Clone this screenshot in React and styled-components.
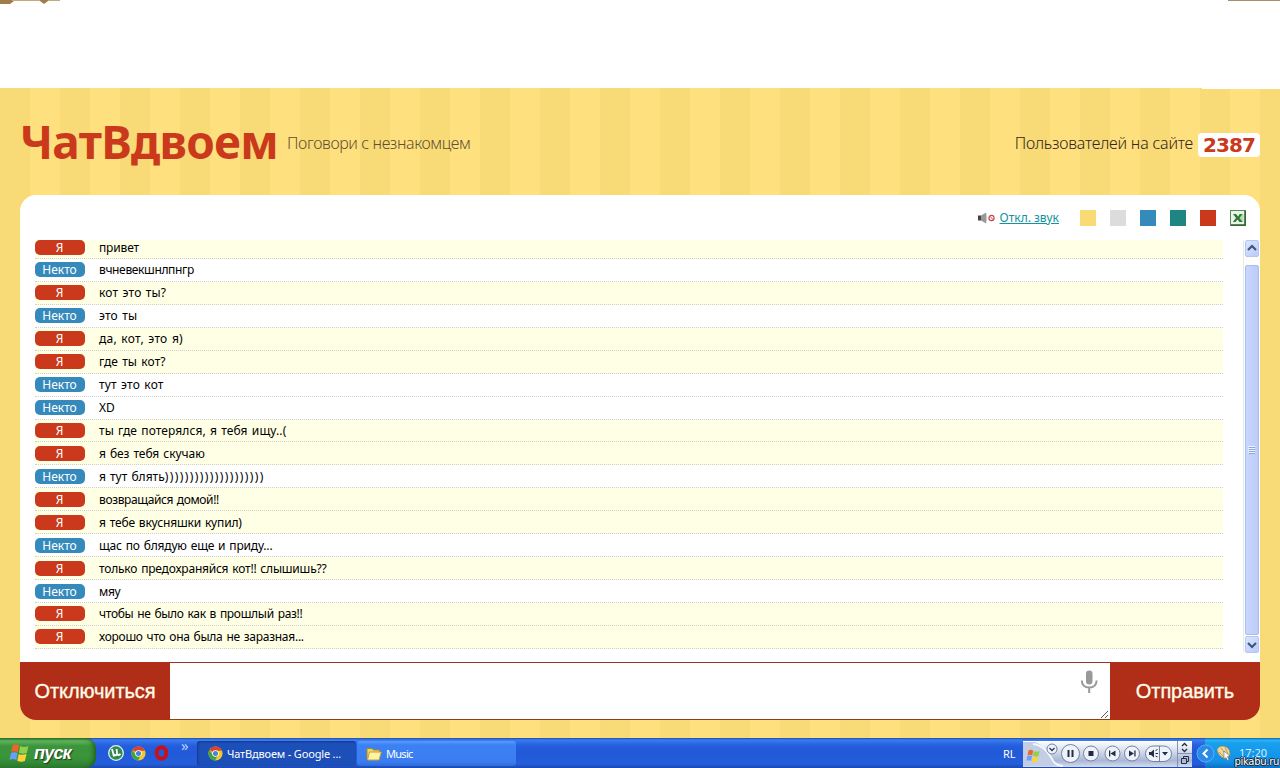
import React from 'react';
import styled, { createGlobalStyle } from 'styled-components';

const GlobalStyle = createGlobalStyle`
  * { box-sizing: border-box; }
  body {
    margin: 0;
    background: #fff;
    font-family: "Noto Sans", "DejaVu Sans", sans-serif;
  }
  button { margin: 0; }
`
const Screen = styled.div`
  display: flex;
  flex-direction: column;
  width: 1280px;
  height: 768px;
  overflow: hidden;
`
const TopStrip = styled.div`
  display: flex;
  justify-content: space-between;
  height: 88px;
  background: #fff;
`
const WoodLeft = styled.svg`
  width: 60px;
  height: 4px;
`
const WoodRight = styled.div`
  width: 52px;
  height: 1px;
  background: #a98d6c;
`
const Page = styled.div`
  display: flex;
  flex-direction: column;
  height: 650px;
  padding: 0 20px;
  background:
    linear-gradient(#fff, #fff) top right / 78px 1px no-repeat,
    repeating-linear-gradient(90deg, #f8da76 0 30px, #ffe07e 30px 60px);
`
const Header = styled.div`
  display: flex;
  align-items: center;
  height: 107px;
`
const Logo = styled.h1`
  margin: -2px 0 0;
  width: 267px;
  font-size: 46px;
  line-height: 50px;
  font-weight: bold;
  color: #ca391b;
  white-space: nowrap;
  letter-spacing: -0.7px;
`
const Slogan = styled.div`
  flex: 1;
  font-size: 16px;
  font-weight: 300;
  letter-spacing: -0.38px;
  color: #5f5032;
  padding-top: 3px;
`
const Online = styled.div`
  font-size: 16px;
  font-weight: 300;
  letter-spacing: -0.2px;
  color: #33261a;
  padding-top: 3px;
`
const Counter = styled.div`
  width: 62px;
  height: 24px;
  margin: 7px 0 0 5px;
  border-radius: 4px;
  background: #fff;
  color: #ca391b;
  font: bold 20px/25px "DejaVu Sans", sans-serif;
  letter-spacing: -0.9px;
  text-align: center;
`
const Panel = styled.div`
  display: flex;
  flex-direction: column;
  height: 525px;
  border-radius: 16px;
  overflow: hidden;
  background: #fff;
`
const Tools = styled.div`
  display: flex;
  align-items: center;
  justify-content: flex-end;
  height: 45px;
  padding-right: 14px;
`
const SoundLink = styled.a`
  margin: 0 21px 0 5px;
  font-size: 12px;
  color: #12939f;
  text-decoration: underline;
`
const Swatches = styled.div`
  display: flex;
  gap: 14px;
`
const Swatch = styled.div`
  width: 16px;
  height: 16px;
  background: ${p => p.$color};
`
const Chat = styled.div`
  display: flex;
  justify-content: space-between;
  height: 422px;
  padding-left: 15px;
`
const Messages = styled.div`
  width: 1188px;
  height: 413px;
`
// the first row is partly scrolled away, so it is shorter than the rest
const Row = styled.div`
  display: flex;
  height: 22.9375px;
  padding-top: 3.43px;
  border-bottom: 1px dotted #cfcfc4;
  background: ${p => p.$mine ? '#ffffe5' : '#fff'};

  &:first-child {
    height: 18.97px;
    padding-top: 0;
  }
`
const Author = styled.div`
  width: 50px;
  height: 15px;
  border-radius: 5px;
  background: ${p => p.$mine ? '#ca391b' : '#358abb'};
  color: #fff;
  font-size: 12px;
  line-height: 15px;
  text-align: center;
  text-indent: -1px;
`
const Message = styled.div`
  margin-left: 14px;
  font-size: 12px;
  line-height: 15px;
  color: #000;
  white-space: nowrap;
  word-spacing: 1px;
  letter-spacing: ${p => p.$track || 0}px;
`
const Brackets = styled.span`
  letter-spacing: 1.4px;
`
const Scrollbar = styled.div`
  display: flex;
  flex-direction: column;
  width: 17px;
  height: 413px;
  padding: 0 1px;
  background: #fdfdfa;
  border-left: 1px solid #e6ebe4;
`
const ScrollButton = styled.div`
  display: flex;
  align-items: center;
  justify-content: center;
  height: 17px;
  padding-right: 1px;
  border: 1px solid #b3c6f5;
  border-radius: 2px;
  background: linear-gradient(135deg, #dbe5fe, #b9cbf9);
`
const Thumb = styled.div`
  display: flex;
  align-items: center;
  justify-content: center;
  height: 371px;
  margin: 8px 0 1px;
  padding-right: 1px;
  border: 1px solid #a9bdee;
  border-radius: 2px;
  background: linear-gradient(90deg, #c9d7fd, #bccbf8);
`
const Compose = styled.div`
  display: flex;
  height: 58px;
`
const BigButton = styled.button`
  width: 150px;
  padding: 0;
  border: 0;
  background: #b02e17;
  color: #fffbe8;
  font: 20px "Liberation Sans", sans-serif;
  letter-spacing: -0.1px;
  -webkit-text-stroke: 0.35px #fffbe8;
`
const InputBox = styled.div`
  display: flex;
  flex-direction: column;
  justify-content: space-between;
  align-items: flex-end;
  flex: 1;
  border-top: 1px solid #8f3a28;
  border-bottom: 1px solid #8f3a28;
  background: #fff;
`
const MicIcon = styled.svg`
  width: 18px;
  height: 24px;
  margin: 7px 12px 0 0;
`
const GripIcon = styled.svg`
  width: 10px;
  height: 10px;
`
const Taskbar = styled.div`
  display: flex;
  height: 30px;
  background: linear-gradient(#1f4ba8 0, #3a80f0 2px, #3170ea 4px, #245edc 8px, #2259d8 15px, #245edb 26px, #1c48b0 30px);
  color: #fff;
  font-size: 11px;
`
const StartButton = styled.div`
  display: flex;
  align-items: center;
  width: 96px;
  padding-left: 9px;
  border-radius: 0 10px 10px 0;
  background: linear-gradient(#2a6b2a 0, #5fb45c 3px, #3c953c 8px, #38943a 20px, #2c7a2e 30px);
  box-shadow: inset -4px 0 5px -2px #1d5c20;
  font: italic bold 18px "Liberation Sans", sans-serif;
  letter-spacing: -0.8px;
  text-shadow: 1px 1px 1px #1b3d1b;
`
const StartLabel = styled.span`
  margin-left: 5px;
`
const QuickLaunch = styled.div`
  display: flex;
  align-items: center;
  width: 101px;
  padding-left: 12px;
  gap: 7px;
`
const More = styled.span`
  margin: -16px 0 0 5px;
  font-size: 15px;
  color: #b8d0ff;
`
const TaskButton = styled.div`
  display: flex;
  align-items: center;
  width: 159px;
  height: 25px;
  margin: 3px 1px 0 0;
  padding-left: ${p => p.$active ? '11px' : '9px'};
  gap: 4px;
  border-radius: 3px;
  letter-spacing: ${p => p.$active ? '-0.17px' : '-0.7px'};
  background: ${p => p.$active ? '#1d4fb8' : 'linear-gradient(#5a9bff 0, #3c81f3 4px, #3a7df0 21px, #2f6ad8)'};
  box-shadow: ${p => p.$active ? 'inset 1px 1px 2px #123a8c' : 'none'};
`
const Spacer = styled.div`
  flex: 1;
`
const Language = styled.div`
  width: 20px;
  line-height: 31px;
  font-size: 11px;
`
const Player = styled.svg`
  width: 169px;
  height: 26px;
  margin-top: 3px;
`
const Tray = styled.div`
  display: flex;
  position: relative;
  width: 75px;
  margin-left: 13px;
  background: linear-gradient(#0c5fa8 0, #2bb3f5 2px, #18a0ee 5px, #1290e8 24px, #0f6fc0 30px);
`
const TrayArrow = styled.svg`
  position: absolute;
  left: -9px;
  top: 6px;
  width: 19px;
  height: 19px;
`
const TrayIcon = styled.svg`
  width: 16px;
  height: 16px;
  margin: 7px 0 0 11px;
`
const Clock = styled.div`
  margin-left: 7px;
  line-height: 30px;
  font-size: 11px;
  color: #d8efff;
`
const Watermark = styled.div`
  position: absolute;
  right: 1px;
  bottom: 0;
  font: 10px/13px "DejaVu Sans", sans-serif;
  letter-spacing: -0.3px;
  color: #fff;
  text-shadow: 1px 0 #123, -1px 0 #123, 0 1px #123, 0 -1px #123;
`

const messages = [
  { mine: true, text: 'привет', track: -0.15 },
  { mine: false, text: 'вчневекшнлпнгр', track: -0.36 },
  { mine: true, text: 'кот это ты?', track: 0.18 },
  { mine: false, text: 'это ты', track: 0.17 },
  { mine: true, text: 'да, кот, это я)', track: 0.27 },
  { mine: true, text: 'где ты кот?', track: 0.1 },
  { mine: false, text: 'тут это кот', track: 0.18 },
  { mine: false, text: 'XD' },
  { mine: true, text: 'ты где потерялся, я тебя ищу..(', track: 0.1 },
  { mine: true, text: 'я без тебя скучаю', track: -0.06 },
  { mine: false, text: 'я тут блять', brackets: 20 },
  { mine: true, text: 'возвращайся домой!!', track: -0.37 },
  { mine: true, text: 'я тебе вкусняшки купил)', track: -0.17 },
  { mine: false, text: 'щас по блядую еще и приду...', track: -0.18 },
  { mine: true, text: 'только предохраняйся кот!! слышишь??', track: -0.2 },
  { mine: false, text: 'мяу', track: -0.3 },
  { mine: true, text: 'чтобы не было как в прошлый раз!!', track: -0.3 },
  { mine: true, text: 'хорошо что она была не заразная...', track: -0.26 },
];

const colors = ['#f8da76', '#dcdcdc', '#358abb', '#1f8583', '#ca391b'];

const ChromeIcon = ({ size }) => (
  <svg width={size} height={size} viewBox="0 0 16 16">
    <circle cx="8" cy="8" r="7.5" fill="#f6c927" />
    <path d="M8 8 L1.5 4.3 A7.5 7.5 0 0 1 14.8 5 L8 5 Z" fill="#dd4132" />
    <path d="M1.5 4.3 A7.5 7.5 0 0 0 7.5 15.5 L10.6 9.5 L8 8 L5.4 9.5 Z" fill="#3fa24a" />
    <circle cx="8" cy="8" r="3.5" fill="#fff" />
    <circle cx="8" cy="8" r="2.7" fill="#4583d8" />
  </svg>
)

const FlagIcon = ({ size }) => (
  <svg width={size} height={size} viewBox="0 0 18 18">
    <path d="M3.2 2 Q6 0.2 9.2 2 L8 8.3 Q5 6.5 2 8 Z" fill="#f0642c" />
    <path d="M10 2.6 Q13.5 4.5 17.5 2.7 L16 9 Q12.500 10.5 9 8.8 Z" fill="#8fd04c" />
    <path d="M1.8 9 Q5 7.5 7.8 9.3 L6.5 15.4 Q4 13.5 0.5 15 Z" fill="#6c9cff" />
    <path d="M8.8 9.8 Q12 11.4 15.8 10 L14.3 16.3 Q10.5 17.8 7.4 16 Z" fill="#fdd23a" />
  </svg>
)

const Arrow = ({ up }) => (
  <svg width="10" height="8" viewBox="0 0 10 8">
    <path d={up ? 'M1 6 L5 2 L9 6' : 'M1 2 L5 6 L9 2'} fill="none" stroke="#3f5482" strokeWidth="2.2" />
  </svg>
)

const MediaPlayer = () => (
  <Player viewBox="0 0 169 26">
    <defs>
      <linearGradient id="bar" x1="0" y1="0" x2="0" y2="1">
        <stop offset="0" stopColor="#fff" />
        <stop offset="0.4" stopColor="#d3dbec" />
        <stop offset="0.75" stopColor="#a9b7d6" />
        <stop offset="1" stopColor="#d5dcec" />
      </linearGradient>
    </defs>
    <rect width="169" height="26" fill="url(#bar)" />
    <path d="M0 1 H12 Q24 5 30 25 H0 Z" fill="#c3cde4" />
    <path d="M10 3 Q22 4 30 20 Q34 25 40 25" fill="none" stroke="#f4f6fb" strokeWidth="2" />
    <g transform="translate(3 8)"><FlagIcon size={14} /></g>
    <g fill="#eef2fa" stroke="#74819f">
      <circle cx="29" cy="8" r="5" />
      <circle cx="47.5" cy="12.5" r="9" />
      <circle cx="68" cy="12.5" r="7.5" />
      <circle cx="89.5" cy="12.5" r="7.5" />
      <circle cx="109" cy="12.5" r="7.5" />
      <rect x="122.5" y="5" width="26" height="15.5" rx="7.7" />
      <path d="M136.5 5 V20.5" />
    </g>
    <path d="M26.5 7 L29 9.5 L31.5 7" fill="none" stroke="#2a3550" strokeWidth="1.3" />
    <g fill="#222c44">
      <path d="M44.5 9 H46.5 V16 H44.5 Z M48.5 9 H50.5 V16 H48.5 Z" />
      <rect x="65.5" y="10" width="5" height="5" />
      <path d="M86 9.5 H87.3 V15.5 H86 Z M92.5 9.5 V15.5 L87.5 12.5 Z" />
      <path d="M106 9.5 V15.5 L111 12.5 Z M111.3 9.5 H112.6 V15.5 H111.3 Z" />
      <path d="M126 11 H128 L131 8.5 V16.5 L128 14 H126 Z" />
      <path d="M139 11 H145 L142 14.5 Z" />
    </g>
    <path d="M132.5 9.5 L134.5 8.5 M132.5 12.5 H135 M132.5 15 L134.5 16" stroke="#222c44" />
    <path d="M154.5 0 V26 M154.5 12.5 H169" stroke="#8391b3" />
    <path d="M159 5 L161.5 2.5 L164 5 M159 8 L161.5 10.5 L164 8" fill="none" stroke="#222c44" strokeWidth="1.3" />
    <path d="M158.5 17.5 H163.5 V22.5 H158.5 Z M160.5 17 V15.5 H165.5 V20.5 H164" fill="none" stroke="#222c44" />
  </Player>
)

class App extends React.Component {
  renderToolbar() {
    return (
      <Tools>
        <svg width="17" height="14" viewBox="0 0 17 14">
          <path d="M0 4.5 H3 V9.5 H0 Z" fill="#444" />
          <path d="M3 4.5 L8 1.5 V12.5 L3 9.5 Z" fill="#999" />
          <path d="M8 1.5 Q10.5 7 8 12.5 Z" fill="#ccc" />
          <circle cx="13.5" cy="7" r="2.6" fill="#fff" stroke="#c8474b" strokeWidth="1.2" />
          <path d="M11.7 5.2 L15.3 8.8" stroke="#c8474b" />
        </svg>
        <SoundLink>Откл. звук</SoundLink>
        <Swatches>
          {colors.map(color => <Swatch key={color} $color={color} />)}
          <svg width="16" height="16" viewBox="0 0 16 16">
            <rect x="0.5" y="0.5" width="15" height="15" fill="#e9f3e6" stroke="#5b8a5c" />
            <path d="M15 1 V15 H1" fill="none" stroke="#2d5e30" strokeWidth="1.5" />
            <rect x="9" y="4" width="4.5" height="8" fill="#b9d8b4" />
            <path d="M3 4 H6 L8 6.5 L10 4 H12.5 L9.5 8 L12.5 12 H9.5 L7.5 9.5 L5.5 12 H2.8 L6 8 Z" fill="#2d7a33" />
          </svg>
        </Swatches>
      </Tools>
    )
  }

  renderTaskbar() {
    return (
      <Taskbar>
        <StartButton>
          <FlagIcon size={20} />
          <StartLabel>пуск</StartLabel>
        </StartButton>
        <QuickLaunch>
          <svg width="16" height="16" viewBox="0 0 16 16">
            <circle cx="8" cy="8" r="7.3" fill="#2f8a52" stroke="#e6f3ea" strokeWidth="1.3" />
            <path d="M4 4 L6 11.5 M5 8 Q6 11 8.5 10 Q9.5 9 8.5 4 M9 9 Q10 11 12.5 9" fill="none" stroke="#fff" strokeWidth="1.8" />
          </svg>
          <ChromeIcon size={15} />
          <svg width="16" height="16" viewBox="0 0 16 16">
            <ellipse cx="8.5" cy="8" rx="4.8" ry="5.8" fill="none" stroke="#c4121c" strokeWidth="4" />
          </svg>
          <More>»</More>
        </QuickLaunch>
        <TaskButton $active>
          <ChromeIcon size={15} />
          <span>ЧатВдвоем - Google ...</span>
        </TaskButton>
        <TaskButton>
          <svg width="16" height="14" viewBox="0 0 16 14">
            <path d="M1 1.5 H6 L7.5 3 H13.5 V12.5 H1 Z" fill="#f0d660" stroke="#a98a2a" />
            <path d="M3.5 5 H15.3 L13 13 H1.5 Z" fill="#fff3a6" stroke="#c0a13a" />
          </svg>
          <span>Music</span>
        </TaskButton>
        <Spacer />
        <Language>RL</Language>
        <MediaPlayer />
        <Tray>
          <TrayArrow viewBox="0 0 19 19">
            <circle cx="9.5" cy="9.5" r="8.5" fill="#2a8ae8" stroke="#5fb0f5" />
            <path d="M11.5 5.5 L7.5 9.5 L11.5 13.5" fill="none" stroke="#fff" strokeWidth="2" />
          </TrayArrow>
          <TrayIcon viewBox="0 0 16 16">
            <path d="M1 5 Q2 1 7 1 Q14 2 14 9 L11 14 Q3 13 1 5 Z" fill="#ecd9a4" stroke="#a98645" strokeWidth="0.7" />
            <path d="M5 3 L11 11 M9 2.5 L12 9 M3 7 L9 13" stroke="#c09a52" />
            <path d="M8 6 L14 11 L11.5 11.5 L13 15 L11.5 15.5 L10 12.500 L8 14 Z" fill="#fff" stroke="#666" strokeWidth="0.6" />
          </TrayIcon>
          <Clock>17:20</Clock>
          <Watermark>pikabu.ru</Watermark>
        </Tray>
      </Taskbar>
    )
  }

  render() {
    return (
      <Screen>
        <GlobalStyle />
        <TopStrip>
          <WoodLeft viewBox="0 0 60 4">
            <path d="M0 0 H60 V1 H48 L44 4 L40 1 H14 L10 4 H0 Z" fill="#a07c4c" />
            <path d="M12 0.5 H40 M48 0.5 H60" stroke="#c9a877" />
          </WoodLeft>
          <WoodRight />
        </TopStrip>
        <Page>
          <Header>
            <Logo>ЧатВдвоем</Logo>
            <Slogan>Поговори с незнакомцем</Slogan>
            <Online>Пользователей на сайте</Online>
            <Counter>2387</Counter>
          </Header>
          <Panel>
            {this.renderToolbar()}
            <Chat>
              <Messages>
                {messages.map((message, idx) => (
                  <Row key={idx} $mine={message.mine}>
                    <Author $mine={message.mine}>{message.mine ? 'Я' : 'Некто'}</Author>
                    <Message $track={message.track}>
                      {message.text}
                      {message.brackets && <Brackets>{')'.repeat(message.brackets)}</Brackets>}
                    </Message>
                  </Row>
                ))}
              </Messages>
              <Scrollbar>
                <ScrollButton><Arrow up /></ScrollButton>
                <Thumb>
                  <svg width="7" height="8" viewBox="0 0 7 8">
                    <path d="M0 0.5 H7 M0 2.5 H7 M0 4.5 H7 M0 6.5 H7" stroke="#eef4ff" />
                    <path d="M1 1.5 H7 M1 3.5 H7 M1 5.5 H7 M1 7.5 H7" stroke="#8ea6e0" />
                  </svg>
                </Thumb>
                <ScrollButton><Arrow /></ScrollButton>
              </Scrollbar>
            </Chat>
            <Compose>
              <BigButton>Отключиться</BigButton>
              <InputBox>
                <MicIcon viewBox="0 0 18 24">
                  <rect x="6" y="0.5" width="6.5" height="14" rx="3.2" fill="#999" />
                  <path d="M1.8 10.5 Q2 17.5 9.2 17.5 Q16.4 17.5 16.6 10.5 M9.2 17.5 V23" fill="none" stroke="#999" strokeWidth="2" />
                </MicIcon>
                <GripIcon viewBox="0 0 10 10">
                  <path d="M1 9 L8 2 M5 9 L8 6" stroke="#555" />
                </GripIcon>
              </InputBox>
              <BigButton>Отправить</BigButton>
            </Compose>
          </Panel>
        </Page>
        {this.renderTaskbar()}
      </Screen>
    )
  }
}

export default App;
